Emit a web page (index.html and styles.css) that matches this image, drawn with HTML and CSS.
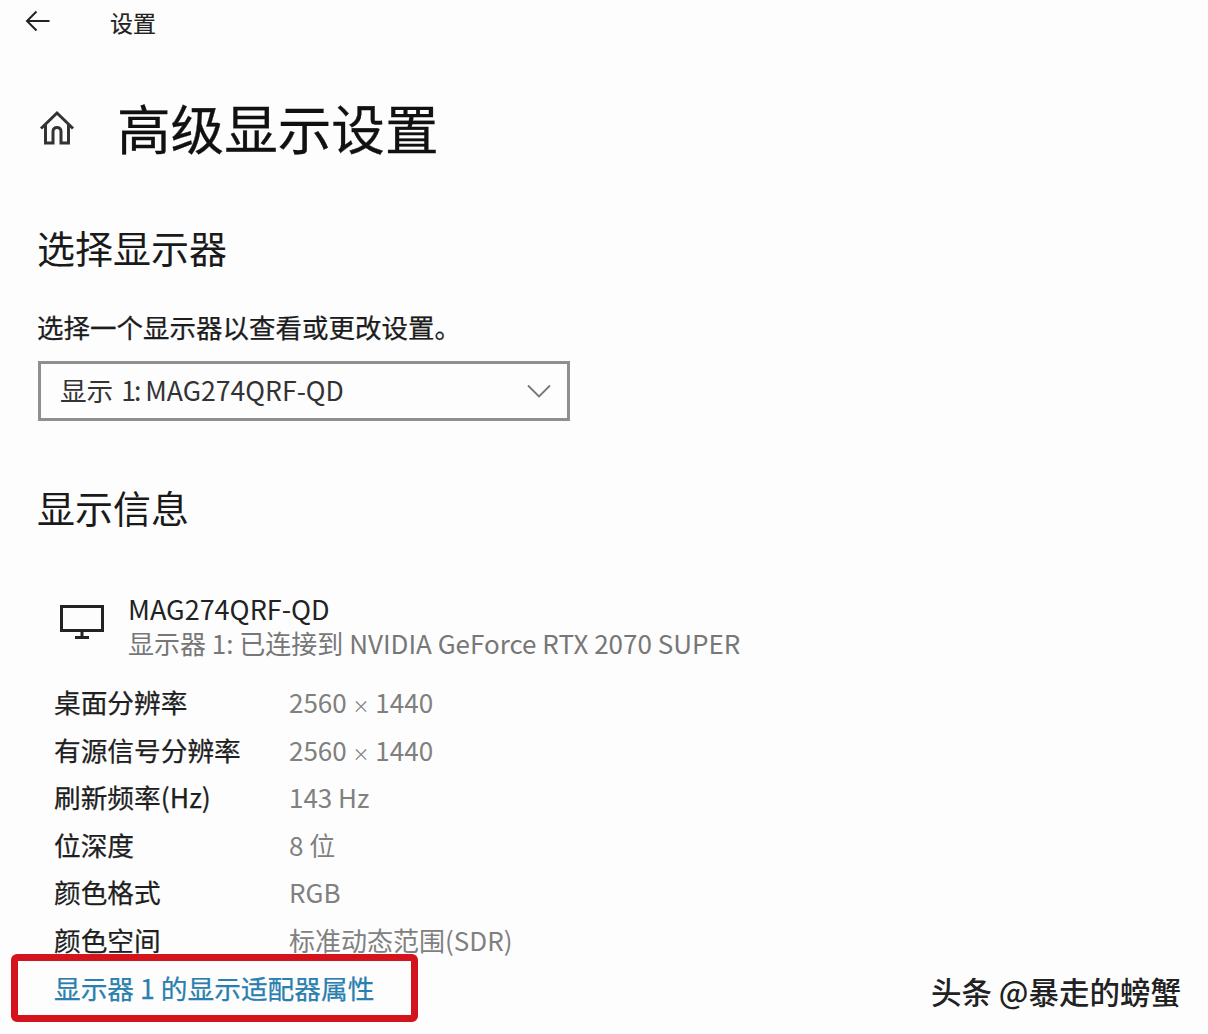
FILE: index.html
```html
<!DOCTYPE html>
<html lang="zh-CN">
<head>
<meta charset="utf-8">
<title>设置</title>
<link rel="stylesheet" href="styles.css">
</head>
<body>
<div class="page">
  <header class="topbar">
    <svg class="back" viewBox="0 0 26 22" aria-hidden="true"><path d="M24.500 11H2M11.500 1.500 2 11l9.500 9.500"/></svg>
    <span class="app-name">设置</span>
  </header>
  <div class="title-row">
    <svg class="home" viewBox="0 0 36 36" aria-hidden="true"><path d="M2 18.500 18 3l16 15.500M6.500 15v18h7.500V21.500c0-5.500 8-5.500 8 0V33h7.500V15"/></svg>
    <h1 class="title">高级显示设置</h1>
  </div>
  <h2 class="section first">选择显示器</h2>
  <p class="hint">选择一个显示器以查看或更改设置。</p>
  <div class="select">
    <span>显示 <span class="port">1:</span> MAG274QRF-QD</span>
    <svg class="chev" viewBox="0 0 24 14" aria-hidden="true"><path d="M1 1.500 12 12.500 23 1.500"/></svg>
  </div>
  <h2 class="section second">显示信息</h2>
  <div class="monitor">
    <svg class="screen" viewBox="0 0 44 34" aria-hidden="true"><path class="frame" d="M1.500 1.500h41v24h-41z"/><path class="stand" d="M22 26v5M15 32.500h14"/></svg>
    <div class="monitor-text">
      <div class="monitor-name">MAG274QRF-QD</div>
      <div class="monitor-sub">显示器 1: 已连接到 NVIDIA GeForce RTX 2070 SUPER</div>
    </div>
  </div>
  <dl class="specs">
    <div class="row"><dt>桌面分辨率</dt><dd>2560 <span class="times">×</span> 1440</dd></div>
    <div class="row"><dt>有源信号分辨率</dt><dd>2560 <span class="times">×</span> 1440</dd></div>
    <div class="row"><dt>刷新频率(Hz)</dt><dd>143 Hz</dd></div>
    <div class="row"><dt>位深度</dt><dd>8 位</dd></div>
    <div class="row"><dt>颜色格式</dt><dd>RGB</dd></div>
    <div class="row"><dt>颜色空间</dt><dd>标准动态范围(SDR)</dd></div>
  </dl>
  <a class="link">显示器 1 的显示适配器属性</a>
  <div class="highlight"></div>
  <div class="watermark">头条 @暴走的螃蟹</div>
</div>
</body>
</html>
```
FILE: styles.css
```css
* { box-sizing: border-box; }
html, body { margin: 0; padding: 0; }
body {
  background: #fdfdfe;
  color: #1c1c1c;
  font-family: "Noto Sans CJK SC", "Noto Sans", sans-serif;
  overflow: hidden;
}
.page { position: relative; width: 1208px; height: 1034px; padding-left: 37px; overflow: hidden; }
.topbar { height: 42px; display: flex; align-items: center; }
.back { width: 26px; height: 22px; margin-left: -12px; margin-top: -1px; fill: none; stroke: #222; stroke-width: 2; }
.app-name { margin-left: 59px; margin-top: 2px; font-size: 23px; line-height: 1; color: #222; -webkit-text-stroke: 0.2px #222; }
.title-row { display: flex; align-items: center; height: 62px; margin-top: 54px; }
.home { width: 36px; height: 36px; fill: none; stroke: #333; stroke-width: 3; margin-left: 2px; margin-top: 2px; }
.title { margin: 0 0 0 42px; font-size: 53.600px; line-height: 62px; font-weight: 400; color: #111; -webkit-text-stroke: 0.3px #111; }
.section { margin: 0; font-size: 38px; line-height: 44px; font-weight: 400; color: #1a1a1a; }
.section.first { margin-top: 67px; }
.section.second { margin-top: 64px; }
.hint { margin: 42px 0 0; font-size: 26.500px; line-height: 32px; -webkit-text-stroke: 0.25px #1c1c1c; }
.select {
  width: 532px; height: 60px; margin: 18px 0 0 1px; padding: 0 16px 3px 19px;
  border: 3px solid #8f8f8f;
  display: flex; align-items: center; justify-content: space-between;
  font-size: 26.600px; color: #333;
}
.port { letter-spacing: -2px; margin-left: 2px; }
.chev { width: 24px; height: 14px; fill: none; stroke: #777; stroke-width: 1.800; margin-top: 3px; }
.monitor { display: flex; margin-top: 63px; margin-left: 23px; }
.screen { width: 44px; height: 34px; margin-top: 13px; fill: none; stroke: #222; }
.frame { stroke-width: 3; }
.stand { stroke-width: 3; }
.monitor-text { margin-left: 24px; font-size: 26px; }
.monitor-name { font-size: 27px; line-height: 34px; color: #222; }
.monitor-sub { line-height: 34px; color: #777; white-space: nowrap; }
.specs { margin: 18px 0 0 17px; }
.row { display: flex; height: 47.500px; align-items: center; }
dt { width: 235px; font-size: 26.700px; color: #1f1f1f; white-space: nowrap; -webkit-text-stroke: 0.25px #1f1f1f; }
dd { margin: 0; font-size: 26px; color: #808080; white-space: nowrap; }
.times { font-size: 17px; }
.link { display: block; margin: 1px 0 0 17px; font-size: 26.700px; line-height: 47px; color: #2a7fae; -webkit-text-stroke: 0.25px #2a7fae; }
.highlight {
  position: absolute; left: 11px; top: 954px; width: 407px; height: 68px;
  border: 7px solid #d3141c; border-radius: 6px;
}
.watermark {
  position: absolute; left: 931px; top: 971px;
  font-size: 30.500px; line-height: 40px; font-weight: 500; color: #222; white-space: nowrap;
}
```
